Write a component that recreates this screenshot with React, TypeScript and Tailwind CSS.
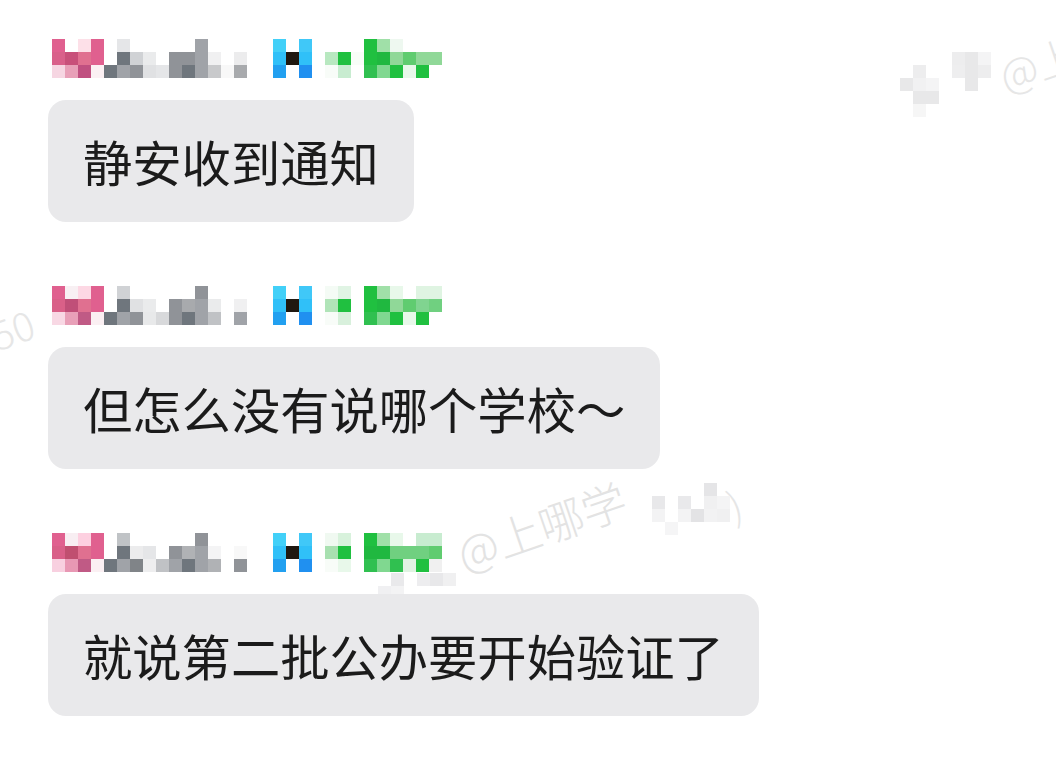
import React from "react";

const W = "#ffffff";
const _ = "transparent";
type Col = [string, string, string];

const BLUE: Col[] = [
  ["#42d0f8", "#30c0f8", "#22a0f0"],
  [W, "#201810", W],
  ["#40c8f8", "#30c0f8", "#2090f0"],
];

const names: Col[][] = [
  [
    ["#e0608f", "#d9608a", "#f6d6e2"],
    [W, "#c8507a", "#e8a0b8"],
    ["#fde0e8", "#e07090", "#c05080"],
    ["#e0608f", "#e0608f", "#fbf0f3"],
    [W, W, "#6f767d"],
    ["#e5e6e8", "#6f767d", "#a0a3a8"],
    [W, "#d0d2d5", "#909398"],
    [W, "#eaebec", "#e0e1e3"],
    [W, W, "#e5e6e8"],
    [W, "#909398", "#909398"],
    [W, "#909398", "#6f767d"],
    ["#a0a3a8", "#a0a3a8", "#a0a3a8"],
    [W, "#f0f0f1", "#c8c9cb"],
    [W, W, "#f8f8f8"],
    [W, "#ececed", "#a8aaad"],
    [W, W, W],
    [W, W, W],
    ...BLUE,
    [W, W, W],
    [W, "#b8e8c0", "#f8fcf8"],
    [W, "#20c040", "#c8ecd0"],
    [W, "#f8fdf8", W],
    ["#20c040", "#20c040", "#30c050"],
    ["#a0e0a8", "#20b840", "#80d890"],
    ["#eef8f0", "#90d898", "#20c040"],
    [W, "#60cc70", "#e8f8ea"],
    [W, "#90d898", "#20c040"],
    [W, "#90d898", W],
  ],
  [
    ["#e0608f", "#d96088", "#f8d8e4"],
    ["#f8f0f3", "#c04f78", "#e8a0b8"],
    ["#fdd8e4", "#e07090", "#c05a85"],
    ["#e0608f", "#e0608f", "#fbf0f3"],
    [W, W, "#6f767d"],
    ["#d0d2d5", "#6f767d", "#a0a3a8"],
    [W, "#e0e1e3", "#909398"],
    [W, "#eaebec", "#e8e9ea"],
    [W, W, "#d8d9db"],
    [W, "#909398", "#909398"],
    [W, "#a8aaad", "#6f767d"],
    ["#909398", "#a0a3a8", "#a0a3a8"],
    [W, "#eaebec", "#c0c2c5"],
    [W, W, W],
    [W, "#f0f0f1", "#a0a3a8"],
    [W, W, W],
    [W, W, W],
    ...BLUE,
    [W, W, W],
    ["#f4fbf5", "#b0e4b8", "#f8fcf8"],
    ["#e0f4e4", "#20c040", "#d8f0dc"],
    [W, W, W],
    ["#20c040", "#20c040", "#30c050"],
    ["#a0e0a8", "#20b840", "#80d890"],
    ["#e8f8ea", "#90d898", "#20c040"],
    [W, "#60cc70", "#e8f8ea"],
    ["#dff4e2", "#80d490", "#20c040"],
    ["#dff4e2", "#70d080", W],
  ],
  [
    ["#e0608f", "#d95f88", "#f8d0e0"],
    ["#f8eef2", "#c04f70", "#e898b4"],
    ["#fdd0e0", "#e07090", "#c05a85"],
    ["#e0608f", "#e0608f", "#fbf0f3"],
    [W, W, "#6f767d"],
    ["#c0c3c6", "#6f767d", "#a0a3a8"],
    [W, "#ececed", "#808488"],
    [W, "#e5e6e8", "#eeeeef"],
    [W, W, "#c0c2c5"],
    [W, "#909398", "#a0a3a8"],
    [W, "#b0b2b5", "#6f767d"],
    ["#909398", "#a0a3a8", "#a0a3a8"],
    [W, "#f4f4f5", "#b0b2b5"],
    [W, W, W],
    [W, "#f8f8f8", "#909398"],
    [W, W, W],
    [W, W, W],
    ...BLUE,
    [W, W, W],
    ["#f0f9f1", "#a8e0b0", "#f8fcf8"],
    ["#d8f2dc", "#20c040", "#e8f8ea"],
    [W, W, W],
    ["#20c040", "#20b840", "#30c050"],
    ["#a0e0a8", "#20b840", "#80d890"],
    ["#e8f8ea", "#70d080", "#30c050"],
    [W, "#70d080", "#e0f2e2"],
    ["#c8ecd0", "#70d080", "#20c040"],
    ["#c8ecd0", "#60cc70", "#f0f0f0"],
  ],
];

const messages = ["静安收到通知", "但怎么没有说哪个学校～", "就说第二批公办要开始验证了"];

const wmTopRight: string[][] = [
  [_, _, _, _, "#ededee", "#e8e8e9", "#f4f4f5"],
  [_, "#ededee", _, _, "#eeeeef", "#e8e8e9", "#ededee"],
  ["#e8e8e9", "#f1f1f2", "#f4f4f5", _, _, "#e8e8e9", _],
  [_, "#e8e8e9", "#e8e8e9", _, _, _, _],
  [_, "#f6f6f6", _, _, _, _, _],
];

const wmMiddle: string[][] = [
  [_, _, _, _, "#e5e5e7", _],
  ["#e8e8ea", _, "#e9e9eb", _, "#f0f0f1", "#f4f4f5"],
  ["#f3f3f4", _, "#f3f3f4", "#e3e3e5", "#f2f2f3", "#f0f0f1"],
  [_, "#f5f5f6", _, _, _, _],
];

const wmBottom: string[][] = [
  [_, "#e9e9eb", _, "#ededef", "#e8e8ea", "#f0f0f1"],
  ["#f0f0f2", "#f3f3f4", _, _, _, _],
];

function Mosaic({ cols }: { cols: Col[] }) {
  return (
    <div className="ml-[4px] flex h-[39px] blur-[0.4px]">
      {cols.map((c, i) => (
        <div key={i} className="flex w-[13px] flex-col">
          {c.map((color, j) => (
            <div key={j} className="h-[13px] w-[13px]" style={{ backgroundColor: color }} />
          ))}
        </div>
      ))}
    </div>
  );
}

function WmGrid({ rows, className }: { rows: string[][]; className: string }) {
  return (
    <div className={`absolute flex flex-col blur-[0.4px] ${className}`}>
      {rows.map((r, i) => (
        <div key={i} className="flex">
          {r.map((c, j) => (
            <div key={j} className="h-[13px] w-[13px]" style={{ backgroundColor: c }} />
          ))}
        </div>
      ))}
    </div>
  );
}

export default function App() {
  const font = { fontFamily: '"Noto Sans CJK SC", "Noto Sans", sans-serif' };
  return (
    <div className="relative h-[757px] w-[1056px] overflow-hidden bg-white pl-[48px] pt-[39px]" style={font}>
      {/* watermarks */}
      <div className="pointer-events-none absolute inset-0">
        <div className="absolute left-[-30px] top-[302px] rotate-[-20deg] text-[40px] font-light text-[#e6e6e6]">350</div>
        <div className="absolute left-[458px] top-[520px] origin-left rotate-[-19deg] whitespace-nowrap text-[45px] font-light text-[#e3e3e3]">@上哪学</div>
        <div className="absolute left-[728px] top-[474px] rotate-[-19deg] text-[40px] font-light text-[#e6e6e6]">)</div>
        <div className="absolute left-[1000px] top-[44px] origin-left rotate-[-19deg] whitespace-nowrap text-[42px] font-light text-[#e6e6e6]">@上</div>
        <WmGrid rows={wmTopRight} className="left-[900px] top-[52px]" />
        <WmGrid rows={wmMiddle} className="left-[652px] top-[483px]" />
        <WmGrid rows={wmBottom} className="left-[378px] top-[573px]" />
      </div>

      <div className="relative flex flex-col items-start gap-[64px]">
        {messages.map((m, i) => (
          <div key={i} className="flex flex-col items-start gap-[22px]">
            <Mosaic cols={names[i]} />
            <div className="flex h-[122px] items-center whitespace-nowrap rounded-[18px] bg-[#e9e9eb] px-[35px] text-[49.3px] leading-none text-[#1b1b1b]">
              {m}
            </div>
          </div>
        ))}
      </div>
    </div>
  );
}
